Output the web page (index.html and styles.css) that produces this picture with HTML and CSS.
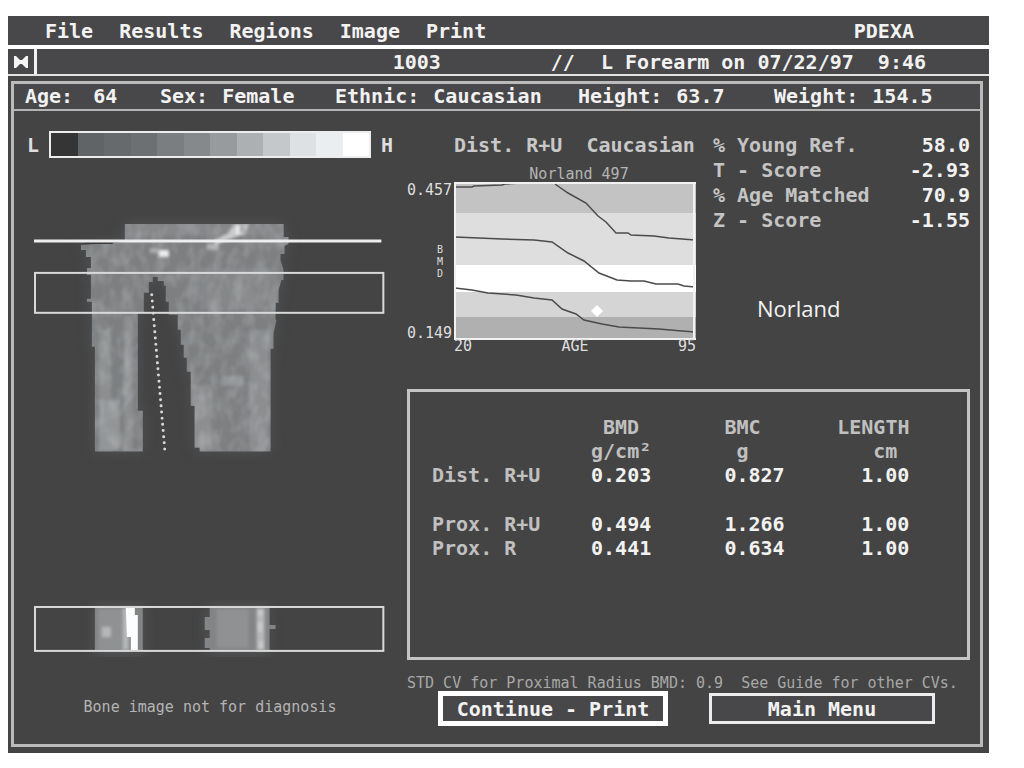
FILE: index.html
```html
<!DOCTYPE html>
<html lang="en">
<head>
<meta charset="utf-8">
<title>PDEXA</title>
<link rel="stylesheet" href="styles.css">
</head>
<body>
<main class="screen">
  <nav class="menubar">
    <button type="button">File</button>
    <button type="button">Results</button>
    <button type="button">Regions</button>
    <button type="button">Image</button>
    <button type="button">Print</button>
    <span class="brand">PDEXA</span>
  </nav>
  <header class="titlebar">
    <button type="button" class="close" aria-label="Close">
      <svg viewBox="0 0 14 12" width="14" height="12"><path d="M0 0h2l4 4h2l4-4h2v12h-2l-4-4H6l-4 4H0z" fill="#f4f4f4"/></svg>
    </button>
    <span class="patient">1003</span>
    <span class="slashes">//</span>
    <span class="exam">L Forearm on 07/22/97&nbsp; 9:46</span>
  </header>
  <section class="frame">
    <dl class="info">
      <div class="wide"><dt>Age:</dt><dd>64</dd></div>
      <div><dt>Sex:</dt><dd>Female</dd></div>
      <div><dt>Ethnic:</dt><dd>Caucasian</dd></div>
      <div><dt>Height:</dt><dd>63.7</dd></div>
      <div><dt>Weight:</dt><dd>154.5</dd></div>
    </dl>
    <div class="body">
      <section class="scan">
        <div class="scale">
          <span>L</span>
          <div class="ramp"><i class="s1"></i><i class="s2"></i><i class="s3"></i><i class="s4"></i><i class="s5"></i><i class="s6"></i><i class="s7"></i><i class="s8"></i><i class="s9"></i><i class="s10"></i><i class="s11"></i><i class="s12"></i></div>
          <span>H</span>
        </div>
        <svg class="bone" viewBox="34 216 352 250">
          <defs>
            <filter id="soft" x="-20%" y="-20%" width="140%" height="140%"><feGaussianBlur stdDeviation="1.5"/></filter>
            <filter id="halo" x="-20%" y="-20%" width="140%" height="140%"><feGaussianBlur stdDeviation="7"/></filter>
            <filter id="grain" x="0" y="0" width="100%" height="100%">
              <feTurbulence type="fractalNoise" baseFrequency="0.09 0.06" numOctaves="2" seed="4"/>
              <feColorMatrix values="0 0 0 0 0.75  0 0 0 0 0.77  0 0 0 0 0.78  1.6 0 0 0 -0.6"/>
            </filter>
            <path id="arm" d="M125 224H284V237H289V244L285 246V254H281V260L284 270V280H282L279 290V303H276V320H277L274 333V349H271V452H200V448H195V406H191V372H187V358H184V345H181V330H178V315H169V302H166V286H164V281H158V277H153V282H149V293H144V313H138V411H143V452H95V347H92V302H87V299H91V275H87V268H91V257H86V250H81V245L125 242Z"/>
            <clipPath id="armclip"><use href="#arm"/></clipPath>
          </defs>
          <use href="#arm" fill="#5b5d5f" opacity=".55" filter="url(#halo)"/>
          <use href="#arm" fill="#7d7f81"/>
          <g clip-path="url(#armclip)">
            <g filter="url(#soft)">
              <path fill="#858789" d="M125 224h160v12H125zM200 268h78v42h-78z"/>
              <path fill="#8c8e90" d="M99 330h12v122H99zM124 316h9v136h-9zM192 385h20v67h-20zM250 330h19v122h-19z"/>
              <path fill="#939597" d="M125 340h6v30h-6zM192 395h16v22h-16zM222 376h22v10h-22zM100 400h20v50h-20z"/>
              <path fill="#c9caca" d="M215 240l14-7 6-9h14l-4 10-14 5-16 6z"/>
              <path fill="#ededed" d="M237 225h9l-3 9h-7zM159 250h10v7h-10z"/>
              <path fill="#a9abac" d="M207 244h12v6h-12zM150 248h8v5h-8zM240 225h5v8h-5z"/>
            </g>
            <rect x="80" y="220" width="212" height="236" filter="url(#grain)" opacity=".3"/>
          </g>
          <path d="M84 243h29" stroke="#383838" stroke-width="2"/>
          <path d="M34 241H382" stroke="#ededed" stroke-width="3"/>
          <rect x="35" y="273" width="349" height="40" fill="none" stroke="#d9d9d9" stroke-width="2"/>
          <path d="M152 295L154 320L165 450" fill="none" stroke="#d8d8d8" stroke-width="3" stroke-linecap="round" stroke-dasharray="0 6.2"/>
        </svg>
        <svg class="bone strip" viewBox="34 600 352 58">
          <g opacity=".5" filter="url(#halo)"><path fill="#626466" d="M95 604h48v52H95zM208 604h60v52h-60z"/></g>
          <path fill="#828486" d="M95 607h48v44H95zM210 607h60v18h6v4h-6v22h-60v-3h-5v-10h5v-8h-5v-13h5z"/>
          <g filter="url(#soft)">
            <path fill="#8f9193" d="M98 609h26v41H98zM217 609h32v39h-32z"/>
            <path fill="#b5b7b8" d="M102 627h9v10h-9zM257 608h8v42h-8zM123 608h6v42h-6z"/>
            <path fill="#c8cacb" d="M258 610h5v6h-5zM258 622h5v10h-5zM259 641h5v8h-5z"/>
          </g>
          <path fill="#fdfdfd" d="M126 608h9v7h3v36h-7v-14h-4z"/>
          <rect x="35" y="607" width="349" height="44" fill="none" stroke="#d9d9d9" stroke-width="2"/>
        </svg>
        <p class="small">Bone image not for diagnosis</p>
      </section>
      <section class="results">
        <div class="top">
          <figure class="chart">
            <h2>Dist. R+U&nbsp; Caucasian</h2>
            <h3 class="small">Norland 497</h3>
            <div class="yaxis small"><span>0.457</span><span class="bmd">B<br>M<br>D</span><span>0.149</span></div>
            <svg class="plot" viewBox="0 0 242 158" preserveAspectRatio="none">
              <path fill="#c3c3c3" d="M0 0h242v31H0z"/>
              <path fill="#dedede" d="M0 31h242v52H0z"/>
              <path fill="#fff" d="M0 83h242v27H0z"/>
              <path fill="#d5d5d5" d="M0 110h242v25H0z"/>
              <path fill="#b0b0b0" d="M0 135h242v23H0z"/>
              <g fill="none" stroke="#4b4b4b" stroke-width="1.5">
                <path d="M1 5L18 5L20 4L48 3L51 2L67 1M101 2L114 11L132 21L144 34L152 40L162 51L174 51L177 53L200 54L215 56L241 58"/>
                <path d="M1 55L48 57L80 58L98 60L114 71L130 79L145 91L163 98L177 99L190 99L202 102L224 102L230 104L241 105"/>
                <path d="M1 106L18 108L34 111L62 113L80 116L98 118L108 127L122 132L130 138L148 142L165 145L205 147L228 149L241 150"/>
              </g>
              <path fill="#fff" d="M143 123l6 6-6 6-6-6z"/>
              <path d="M0 1H242M1 0V157M240 0V158M0 157H242" stroke="#f2f2f2" stroke-width="2"/>
            </svg>
            <div class="xaxis small"><span>20</span><span>AGE</span><span>95</span></div>
          </figure>
          <div class="side">
            <dl class="scores">
              <dt>% Young Ref.</dt><dd>58.0</dd>
              <dt>T - Score</dt><dd>-2.93</dd>
              <dt>% Age Matched</dt><dd>70.9</dd>
              <dt>Z - Score</dt><dd>-1.55</dd>
            </dl>
            <p class="maker">Norland</p>
          </div>
        </div>
        <div class="tablebox">
          <table>
            <colgroup><col class="c1"><col class="c2"><col class="c3"><col></colgroup>
            <thead>
              <tr><th></th><th class="in1">BMD</th><th>BMC</th><th>LENGTH</th></tr>
              <tr class="units"><th></th><th>g/cm²</th><th class="in1">g</th><th class="in3">cm</th></tr>
            </thead>
            <tbody>
              <tr><th>Dist. R+U</th><td>0.203</td><td>0.827</td><td class="in2">1.00</td></tr>
              <tr class="gap"><th>Prox. R+U</th><td>0.494</td><td>1.266</td><td class="in2">1.00</td></tr>
              <tr><th>Prox. R</th><td>0.441</td><td>0.634</td><td class="in2">1.00</td></tr>
            </tbody>
          </table>
        </div>
        <p class="small note">STD CV for Proximal Radius BMD: 0.9&nbsp; See Guide for other CVs.</p>
        <div class="actions">
          <button type="button" class="primary">Continue - Print</button>
          <button type="button">Main Menu</button>
        </div>
      </section>
    </div>
  </section>
</main>
</body>
</html>
```
FILE: styles.css
```css
* { box-sizing: border-box; }
body, p, dl, dd, h2, h3, figure { margin: 0; }
body {
  background: #fff;
  padding: 16px 35px 16px 8px;
  font: bold 20px/24px "DejaVu Sans Mono", monospace;
  color: #f2f2f2;
}
button { font: inherit; color: inherit; background: none; border: 0; padding: 0; }
h2, h3 { font: inherit; }
.screen { background: #444; padding-bottom: 6px; white-space: nowrap; }
.small { font-size: 15px; line-height: 16px; font-weight: normal; color: #b4b4b4; }

.menubar {
  display: flex;
  gap: 26px;
  padding: 3px 75px 2px 37px;
  background: #48484a;
  border-bottom: 4px solid #fff;
  height: 33px;
}
.brand { margin-left: auto; }
.titlebar {
  display: flex;
  align-items: center;
  background: #48484a;
  border-bottom: 2px solid #e2e2e2;
  height: 27px;
  padding-right: 63px;
}
.close {
  display: grid;
  place-items: center;
  width: 29px;
  height: 25px;
  border-right: 3px solid #f2f2f2;
}
.patient { margin-left: auto; }
.slashes { margin: 0 26px 0 110px; }

.frame { margin: 5px 6px 0 3px; border: 3px solid #bababa; }
.info {
  display: grid;
  grid-template-columns: 135fr 175fr 243fr 196fr 206fr;
  padding-left: 11px;
  height: 27px;
  background: #48484a;
  border-bottom: 2px solid #b4b4b4;
}
.info div { display: flex; gap: 14px; }
.info .wide { gap: 20px; }
.body { display: grid; grid-template-columns: 366fr 563fr; gap: 14px; padding: 20px 10px 18px 13px; }

.scan { display: flex; flex-direction: column; }
.scale { display: flex; align-items: center; gap: 10px; height: 27px; color: #dedede; }
.ramp { flex: 1; display: flex; height: 27px; border: 2px solid #ededed; }
.ramp i { flex: 1; }
.s1 { background: #353535; } .s2 { background: #606466; } .s3 { background: #666a6d; }
.s4 { background: #6c7073; } .s5 { background: #7a7e80; } .s6 { background: #85898b; }
.s7 { background: #989b9d; } .s8 { background: #adb0b2; } .s9 { background: #c5c8ca; }
.s10 { background: #dde1e4; } .s11 { background: #ebeef0; } .s12 { background: #fff; }
.bone { display: block; align-self: center; width: 96%; margin-top: 58px; }
.strip { margin-top: 134px; }
.scan .small { text-align: center; margin-top: 42px; }

.results { min-width: 0; }
.top { display: grid; grid-template-columns: 289fr 257fr; gap: 17px; padding-top: 2px; }
.chart { display: grid; grid-template-columns: 47px 1fr; align-content: start; color: #c8c8c8; }
.chart h2, .chart h3, .xaxis { grid-column: 2; }
.chart h3 { text-align: center; margin-top: 9px; padding-left: 8px; }
.plot { width: 100%; height: 158px; }
.yaxis { display: flex; flex-direction: column; justify-content: space-between; height: 159px; }
.yaxis .bmd { line-height: 12px; font-size: 10px; text-align: right; padding-right: 11px; }
.yaxis, .xaxis { color: #dedede; }
.xaxis { display: flex; justify-content: space-between; line-height: 10px; }
.side { display: flex; flex-direction: column; }
.scores { display: grid; grid-template-columns: 1fr auto; line-height: 25px; }
.scores dt { color: #c4c4c4; }
.scores dd { text-align: right; }
.maker { font: 22px/28px "Open Sans", sans-serif; margin: 61px 0 0 44px; }

.tablebox { margin: 38px 0 15px; border: 3px solid #c4c4c4; height: 271px; padding: 23px 22px; }
table { width: 100%; table-layout: fixed; border-collapse: collapse; }
th, td { padding: 0; text-align: left; height: 24px; }
th { color: #c0c0c0; }
.c1 { width: 31%; } .c2 { width: 26%; } .c3 { width: 22%; }
.gap th, .gap td { padding-top: 25px; }
.in1 { padding-left: 12px; }
.gap .in2, .in2 { padding-left: 24px; }
.in3 { padding-left: 36px; }
.note { color: #a8a8a8; }
.actions {
  display: grid;
  grid-template-columns: 230fr 226fr;
  gap: 41px;
  align-items: center;
  padding: 0 35px 0 31px;
}
.actions button { height: 31px; line-height: 20px; background: #48484a; border: 3px solid #ededed; }
.actions .primary { height: 35px; border: 5px solid #fff; }
```
